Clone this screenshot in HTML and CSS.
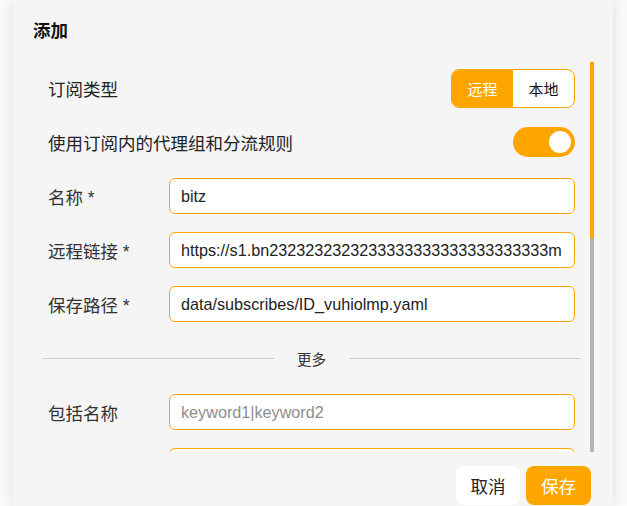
FILE: index.html
```html
<!DOCTYPE html>
<html lang="zh-CN">
<head>
<meta charset="utf-8">
<title>添加</title>
<link rel="stylesheet" href="styles.css">
</head>
<body>
<div class="dialog">
  <h2 class="title">添加</h2>
  <div class="scroll-area">
    <div class="content">
      <div class="row between">
        <span class="label">订阅类型</span>
        <div class="seg"><span class="seg-item active">远程</span><span class="seg-item">本地</span></div>
      </div>
      <div class="row between">
        <span class="label">使用订阅内的代理组和分流规则</span>
        <span class="switch"><span class="knob"></span></span>
      </div>
      <div class="row field">
        <label class="label">名称 *</label>
        <input class="input" value="bitz">
      </div>
      <div class="row field">
        <label class="label">远程链接 *</label>
        <input class="input" value="https://s1.bn2323232323233333333333333333333m">
      </div>
      <div class="row field">
        <label class="label">保存路径 *</label>
        <input class="input" value="data/subscribes/ID_vuhiolmp.yaml">
      </div>
      <div class="divider"><span>更多</span></div>
      <div class="row field">
        <label class="label">包括名称</label>
        <input class="input" placeholder="keyword1|keyword2">
      </div>
      <div class="row field partial">
        <input class="input" aria-label="排除名称">
      </div>
    </div>
    <div class="scrollbar"><div class="thumb"></div></div>
  </div>
  <div class="actions">
    <button class="btn">取消</button>
    <button class="btn primary">保存</button>
  </div>
</div>
</body>
</html>
```

FILE: styles.css
```css
html, body {
  margin: 0;
  height: 100%;
  overflow: hidden;
}

body {
  background: #fbfbfc;
  font-family: "Liberation Sans", "Noto Sans CJK SC", sans-serif;
  color: #222;
}

.dialog {
  width: 600px;
  height: 506px;
  margin-left: 13px;
  background: #f5f5f5;
  box-shadow: 0 0 14px rgba(0, 0, 0, 0.13);
  display: flex;
  flex-direction: column;
}

.title {
  margin: 0;
  padding: 18px 20px 0;
  font-size: 17.5px;
  line-height: 26px;
  font-weight: 700;
  color: #111;
}

.scroll-area {
  height: 390px;
  margin: 18px 19px 0 20px;
  display: flex;
}

.content {
  flex: 1;
  min-width: 0;
  box-sizing: border-box;
  padding: 8px 15px 0 15px;
  overflow: hidden;
  display: flex;
  flex-direction: column;
  gap: 18px;
}

.scrollbar {
  width: 4px;
  flex-shrink: 0;
  background: #b4b4b4;
}

.thumb {
  height: 176px;
  background: #ffa500;
}

.row {
  flex-shrink: 0;
  height: 36px;
  display: flex;
  align-items: center;
}

.between {
  justify-content: space-between;
}

.label {
  font-size: 17.5px;
  color: #222;
}

.field .label {
  width: 121px;
  flex-shrink: 0;
  color: #333;
}

.partial {
  padding-left: 121px;
}

.input {
  flex: 1;
  min-width: 0;
  box-sizing: border-box;
  height: 36px;
  padding: 0 11px;
  border: 1px solid #ffa500;
  border-radius: 6px;
  background: #fff;
  font-family: inherit;
  font-size: 16.2px;
  color: #222;
  outline: none;
}

.input::placeholder {
  color: #8e8e8e;
}

.seg {
  display: flex;
  height: 39px;
  box-sizing: border-box;
  border: 1px solid #ffa500;
  border-radius: 8px;
  overflow: hidden;
  background: #fff;
}

.seg-item {
  display: flex;
  align-items: center;
  justify-content: center;
  width: 61px;
  font-size: 15px;
  color: #111;
}

.seg-item.active {
  background: #ffa500;
  color: #fff;
}

.switch {
  width: 62px;
  height: 30px;
  border-radius: 15px;
  background: #ffa500;
  display: flex;
  align-items: center;
  justify-content: flex-end;
  padding-right: 4px;
  box-sizing: border-box;
}

.knob {
  width: 22px;
  height: 22px;
  border-radius: 50%;
  background: #fff;
}

.divider {
  flex-shrink: 0;
  height: 36px;
  margin: 0 -5px;
  display: flex;
  align-items: center;
  gap: 23px;
  font-size: 14.5px;
  color: #333;
}

.divider::before,
.divider::after {
  content: "";
  flex: 1;
  height: 1px;
  background: #cccccc;
}

.actions {
  display: flex;
  justify-content: flex-end;
  gap: 6px;
  padding: 14px 22px 0 0;
}

.btn {
  width: 64px;
  height: 39px;
  border: none;
  border-radius: 8px;
  background: #fff;
  font-family: inherit;
  font-size: 17.5px;
  color: #222;
  padding: 0;
}

.btn.primary {
  width: 65px;
  background: #ffa500;
  color: #fff;
}
```
